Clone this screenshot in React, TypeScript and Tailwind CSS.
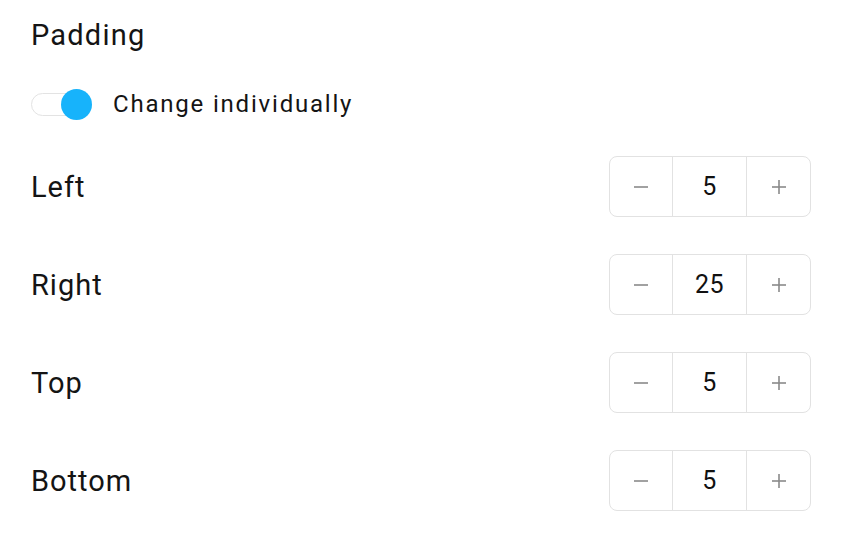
import React from "react";

function Stepper({ value }: { value: number }) {
  return (
    <div className="flex h-[61px] w-[202px] rounded-[8px] border border-[#e2e2e2] bg-white">
      <div className="flex w-[63px] items-center justify-center border-r border-[#e2e2e2]">
        <svg width="18" height="18" viewBox="0 0 18 18"><line x1="2" y1="9" x2="16" y2="9" stroke="#8a8a8a" strokeWidth="1.6" /></svg>
      </div>
      <div className="flex flex-1 items-center justify-center border-r border-[#e2e2e2] text-[25px] tracking-[0.5px] text-[#111]">
        {value}
      </div>
      <div className="flex w-[63px] items-center justify-center">
        <svg width="18" height="18" viewBox="0 0 18 18"><line x1="2" y1="9" x2="16" y2="9" stroke="#8a8a8a" strokeWidth="1.6" /><line x1="9" y1="2" x2="9" y2="16" stroke="#8a8a8a" strokeWidth="1.6" /></svg>
      </div>
    </div>
  );
}

const rows: [string, number][] = [
  ["Left", 5],
  ["Right", 25],
  ["Top", 5],
  ["Bottom", 5],
];

export default function App() {
  return (
    <div
      className="flex h-[540px] w-[848px] flex-col bg-white pl-[31px] pr-[37px] pt-[15px] text-[#141414]"
      style={{ fontFamily: "Roboto, 'Noto Sans', sans-serif" }}
    >
      <div className="h-[40px] text-[29px] leading-[40px] tracking-[1.2px]">Padding</div>
      <div className="mt-[33px] flex h-[32px] items-center">
        <div className="relative h-[32px] w-[62px]">
          <div className="absolute left-0 top-[5px] h-[23px] w-[58px] rounded-full border border-[#e3e3e3] bg-white" />
          <div className="absolute left-[30px] top-[1px] h-[31px] w-[31px] rounded-full bg-[#17b3fb]" />
        </div>
        <span className="ml-[20px] text-[24px] leading-[32px] tracking-[1.8px]">Change individually</span>
      </div>
      <div className="mt-[36px] flex flex-col gap-[37px]">
        {rows.map(([label, v]) => (
          <div key={label} className="flex items-center justify-between">
            <span className="text-[29px] leading-[36px] tracking-[1px]">{label}</span>
            <Stepper value={v} />
          </div>
        ))}
      </div>
    </div>
  );
}
